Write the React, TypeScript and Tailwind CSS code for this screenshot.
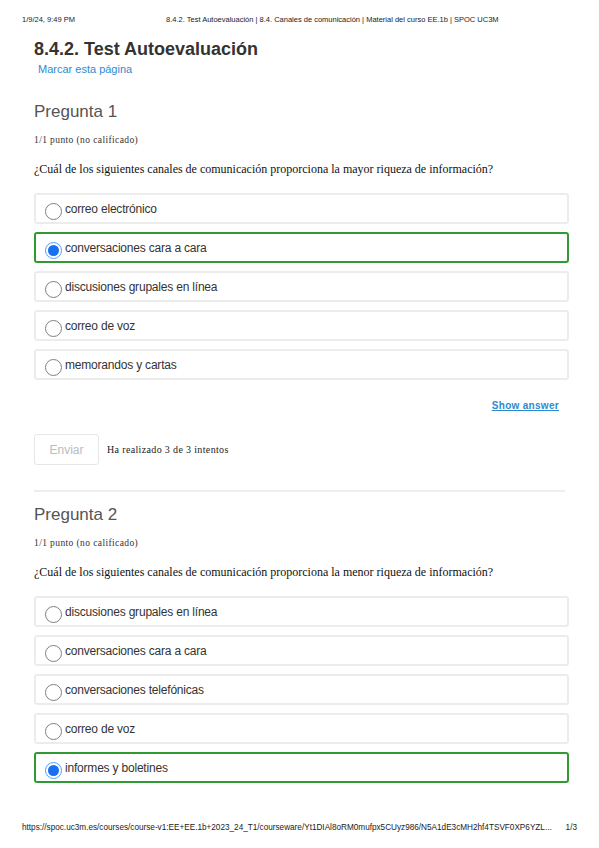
import React from 'react'

type Option = { label: string; selected?: boolean }

const q1: Option[] = [
  { label: 'correo electrónico' },
  { label: 'conversaciones cara a cara', selected: true },
  { label: 'discusiones grupales en línea' },
  { label: 'correo de voz' },
  { label: 'memorandos y cartas' },
]

const q2: Option[] = [
  { label: 'discusiones grupales en línea' },
  { label: 'conversaciones cara a cara' },
  { label: 'conversaciones telefónicas' },
  { label: 'correo de voz' },
  { label: 'informes y boletines', selected: true },
]

const sans = { fontFamily: '"Liberation Sans", Arial, sans-serif' }
const serif = { fontFamily: '"Liberation Serif", "Times New Roman", serif' }

function Radio({ selected }: { selected?: boolean }) {
  if (selected) {
    return (
      <span className="mt-[5px] flex h-[17px] w-[17px] shrink-0 items-center justify-center rounded-full border-[1.5px] border-[#5b9cf5] bg-white">
        <span className="h-[11px] w-[11px] rounded-full bg-[#1a6ef0]" />
      </span>
    )
  }
  return <span className="mt-[5px] h-[17px] w-[17px] shrink-0 rounded-full border border-[#808080] bg-white" />
}

function OptionRow({ opt }: { opt: Option }) {
  return (
    <div
      className={`flex h-[31px] items-center gap-[3px] rounded-[3px] border-2 pl-[9px] ${
        opt.selected ? 'border-[#2f9a32]' : 'border-[#ececec]'
      }`}
    >
      <Radio selected={opt.selected} />
      <span className="text-[12px] tracking-[-0.2px] text-[#333]" style={sans}>
        {opt.label}
      </span>
    </div>
  )
}

function Question({ num, text, options }: { num: number; text: string; options: Option[] }) {
  return (
    <div>
      <h2 className="text-[17px] leading-[20px] text-[#555]" style={sans}>
        Pregunta {num}
      </h2>
      <p className="mt-[12px] text-[9.5px] leading-[12px] tracking-[0.4px] text-[#333]" style={serif}>
        1/1 punto (no calificado)
      </p>
      <p className="mt-[15px] text-[12px] leading-[16px] text-[#111]" style={serif}>
        {text}
      </p>
      <div className="mt-[16px] flex w-[535px] flex-col gap-[8px]">
        {options.map(o => (
          <OptionRow key={o.label} opt={o} />
        ))}
      </div>
    </div>
  )
}

export default function App() {
  return (
    <div className="relative h-[848px] w-[599px] bg-white">
      {/* print header */}
      <div className="flex pl-[22px] pt-[15px] text-[7.5px] leading-[10px] text-[#222]" style={sans}>
        <span className="w-[144px]">1/9/24, 9:49 PM</span>
        <span>8.4.2. Test Autoevaluación | 8.4. Canales de comunicación | Material del curso EE.1b | SPOC UC3M</span>
      </div>

      <div className="pl-[34px]">
        <h1 className="mt-[12px] text-[18px] font-bold leading-[24px] text-[#333]" style={sans}>
          8.4.2. Test Autoevaluación
        </h1>
        <a className="ml-[4px] mt-[1px] block text-[11px] leading-[14px] text-[#2d8bd0]" style={sans}>
          Marcar esta página
        </a>

        <div className="mt-[26px]">
          <Question
            num={1}
            text="¿Cuál de los siguientes canales de comunicación proporciona la mayor riqueza de información?"
            options={q1}
          />
        </div>

        <div className="flex w-[525px] justify-end pt-[20px]">
          <a className="text-[10px] font-bold leading-[12px] tracking-[0.3px] text-[#2d8bd0] underline" style={sans}>
            Show answer
          </a>
        </div>

        <div className="mt-[22px] flex items-center gap-[8px]">
          <button
            className="h-[31px] w-[65px] rounded-[3px] border border-[#e6e6e6] text-[12px] text-[#bbb]"
            style={sans}
          >
            Enviar
          </button>
          <span className="text-[10px] tracking-[0.35px] text-[#222]" style={serif}>
            Ha realizado 3 de 3 intentos
          </span>
        </div>

        <div className="mt-[25px] h-[2px] w-[531px] bg-[#eeeeee]" />

        <div className="mt-[13px]">
          <Question
            num={2}
            text="¿Cuál de los siguientes canales de comunicación proporciona la menor riqueza de información?"
            options={q2}
          />
        </div>
      </div>

      {/* print footer */}
      <div
        className="absolute left-[22px] top-[823px] flex w-[555px] justify-between text-[8.2px] leading-[10px] text-[#222]"
        style={sans}
      >
        <span>
          https://spoc.uc3m.es/courses/course-v1:EE+EE.1b+2023_24_T1/courseware/Yt1DIAl8oRM0mufpx5CUyz986/N5A1dE3cMH2hf4TSVF0XP6YZL...
        </span>
        <span>1/3</span>
      </div>
    </div>
  )
}
